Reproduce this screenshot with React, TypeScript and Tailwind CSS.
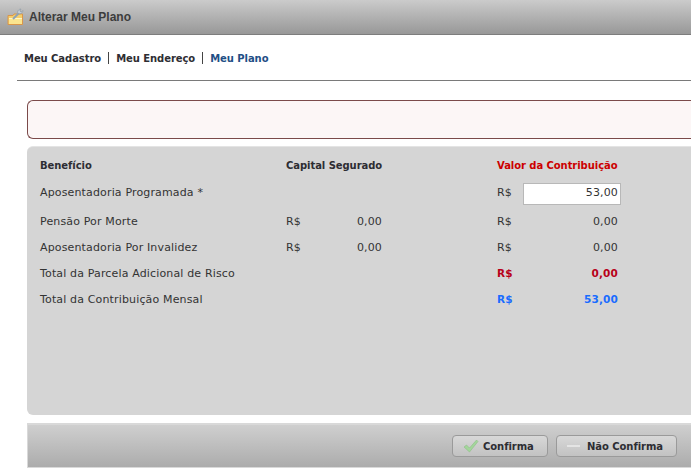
const regular = "font-['Verdana','DejaVu_Sans',sans-serif] text-[11px] tracking-[0.15px]"
const bold = "font-['Verdana','DejaVu_Sans',sans-serif] text-[10px] font-bold tracking-[-0.06px]"
const totals = "font-['Verdana','DejaVu_Sans',sans-serif] text-[10.5px] font-bold"
const cols = 'grid grid-cols-[246px_96px_115px_121px] items-center'

function FolderIcon() {
  return (
    <svg width="17" height="17" viewBox="0 0 17 17" className="shrink-0">
      <path d="M1 7.500h5l1-1.500h8.500v10.500H1z" fill="#f5cf6b" stroke="#d9964a" strokeWidth="1" />
      <rect x="2" y="11" width="13" height="5" fill="#fbe58f" />
      <path d="M2 10.500h13" stroke="#fff6c8" strokeWidth="1" />
      <path d="M6 11l6-6" stroke="#8fa3b5" strokeWidth="2" />
      <path d="M11 5.500c-1-2 .5-4.500 3-4.500l-1.200 2 1.500 1 1.500-1.500c.3 2-2 4-4.800 3z" fill="#c3ced8" stroke="#7f8c99" strokeWidth="0.5" />
    </svg>
  )
}

function Row({ label, mid, right, rightClass, height }: { label: string; mid?: string; right: string; rightClass?: string; height: string }) {
  return (
    <div className={`${cols} ${height} ${regular} text-[#333]`}>
      <div className="whitespace-nowrap">{label}</div>
      <div className="flex justify-between">
        {mid && <span>R$</span>}
        {mid && <span>{mid}</span>}
      </div>
      <div />
      <div className={rightClass ?? 'flex justify-between'}>
        <span>R$</span>
        <span>{right}</span>
      </div>
    </div>
  )
}

function Button({ children, icon, width }: { children: string; icon: React.ReactNode; width: string }) {
  return (
    <button className={`flex items-center h-[22px] ${width} rounded-[4px] border border-[#9a9a9a] bg-gradient-to-b from-[#d8d8d8] to-[#c2c2c2] pl-[10px] gap-[4px] ${bold} text-[#2d2d33]`}>
      {icon}
      {children}
    </button>
  )
}

export default function App() {
  return (
    <div className="w-[691px] h-[475px] overflow-hidden bg-white">
      {/* Title bar */}
      <div className="flex items-center gap-[5px] h-[35px] pl-[7px] pb-[1px] bg-gradient-to-b from-[#cbcbcb] to-[#989898] border-b border-[#7d7d7d]">
        <FolderIcon />
        <span className="font-['Liberation_Sans',sans-serif] text-[12px] font-bold text-[#3c3c3c]">Alterar Meu Plano</span>
      </div>

      {/* Tabs */}
      <div className="ml-[17px] h-[46px] pt-[15px] pl-[7px] border-b border-[#7a7a7a]">
        <div className={`flex items-center h-[16px] ${bold} text-[#2e2e33]`}>
          <span>Meu Cadastro</span>
          <span className="w-px h-[12px] bg-[#444] mx-[7px]" />
          <span>Meu Endereço</span>
          <span className="w-px h-[12px] bg-[#444] mx-[7px]" />
          <span className="text-[#1f4f86]">Meu Plano</span>
        </div>
      </div>

      <div className="ml-[27px] mt-[19px]">
        {/* Message box */}
        <div className="h-[39px] rounded-l-[6px] border border-r-0 border-[#7b4a4a] bg-[#fcf6f6]" />

        {/* Data panel */}
        <div className="mt-[7px] h-[269px] rounded-l-[6px] bg-[#d5d5d5] border-t border-[#e4e4e4] pl-[13px] pt-[8px]">
          <div className={`${cols} h-[20px] ${bold} text-[#2d2d33]`}>
            <div>Benefício</div>
            <div className="whitespace-nowrap">Capital Segurado</div>
            <div />
            <div className="text-[#cc0000] whitespace-nowrap">Valor da Contribuição</div>
          </div>
          <div className={`grid grid-cols-[246px_96px_115px_26px_98px] items-center h-[35px] pt-[2px] ${regular} text-[#333]`}>
            <div>Aposentadoria Programada *</div>
            <div />
            <div />
            <div>R$</div>
            <input
              readOnly
              value="53,00"
              className="w-[98px] h-[22px] bg-white border border-[#b8b8b8] text-right pr-[2px] pb-[2px] outline-none"
            />
          </div>
          <Row height="h-[24px]" label="Pensão Por Morte" mid="0,00" right="0,00" />
          <Row height="h-[28px]" label="Aposentadoria Por Invalidez" mid="0,00" right="0,00" />
          <Row height="h-[24px]" label="Total da Parcela Adicional de Risco" right="0,00" rightClass={`flex justify-between ${totals} text-[#b80018]`} />
          <Row height="h-[28px]" label="Total da Contribuição Mensal" right="53,00" rightClass={`flex justify-between ${totals} text-[#1a6cff]`} />
        </div>

        {/* Footer */}
        <div className="mt-[8px] h-[45px] flex items-center justify-end gap-[8px] pr-[14px] border-t-2 border-l border-b border-[#d9d9d9] bg-gradient-to-b from-[#cfcfcf] to-[#acacac]">
          <Button
            width="w-[96px]"
            icon={
              <svg width="16" height="14" viewBox="0 0 16 14">
                <path d="M1 8l2.500-2 3 3L13.500 1 15 2.500 6.500 13z" fill="#a3d69b" stroke="#86b97f" strokeWidth="0.5" />
              </svg>
            }
          >
            Confirma
          </Button>
          <Button
            width="w-[121px]"
            icon={<span className="w-[13px] h-[2px] bg-[#e4e4e4] mr-[3px]" />}
          >
            Não Confirma
          </Button>
        </div>
      </div>
    </div>
  )
}
